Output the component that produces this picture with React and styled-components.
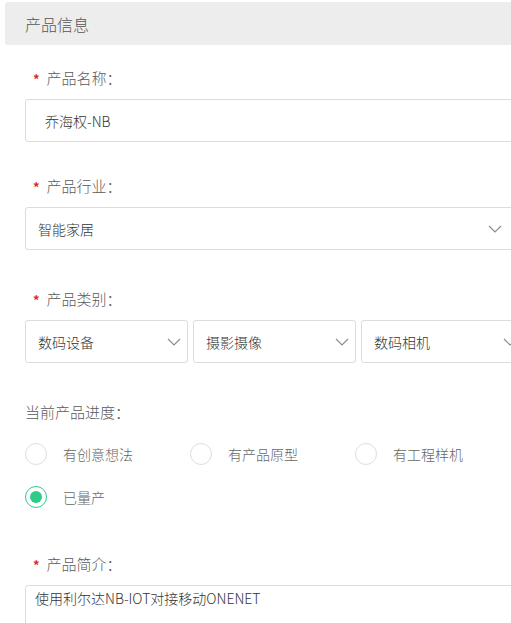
import React, { useState } from "react";
import styled, { createGlobalStyle } from "styled-components";

const GlobalStyle = createGlobalStyle`
  html, body {
    margin: 0;
    padding: 0;
    background: #fff;
    overflow: hidden;
  }
  body {
    font-family: "Noto Sans CJK SC", "Noto Sans", sans-serif;
    font-weight: 300;
  }
`;

const progressOptions = ["有创意想法", "有产品原型", "有工程样机", "已量产"];

function Chevron() {
  return (
    <svg width="14" height="8" viewBox="0 0 14 8">
      <polyline points="1,1 7,7 13,1" fill="none" stroke="#8a8a8a" strokeWidth="1.1" />
    </svg>
  );
}

function SelectBox({ value, width, arrowRight }) {
  return (
    <Select width={width}>
      <span>{value}</span>
      <ArrowBox right={arrowRight}>
        <Chevron />
      </ArrowBox>
    </Select>
  );
}

function App() {
  const [progress, setProgress] = useState("已量产");

  return (
    <Page>
      <GlobalStyle />
      <Header>产品信息</Header>
      <Form>
        <Label gap={23}>
          <Star>*</Star>产品名称：
        </Label>
        <TextInput defaultValue="乔海权-NB" />

        <Label gap={34}>
          <Star>*</Star>产品行业：
        </Label>
        <SelectBox value="智能家居" width="490px" arrowRight="12px" />

        <Label gap={39}>
          <Star>*</Star>产品类别：
        </Label>
        <SelectRow>
          <SelectBox value="数码设备" width="163px" arrowRight="6px" />
          <SelectBox value="摄影摄像" width="163px" arrowRight="6px" />
          <SelectBox value="数码相机" width="163px" arrowRight="6px" />
        </SelectRow>

        <PlainLabel>当前产品进度：</PlainLabel>
        <RadioGroup>
          {progressOptions.map((opt) => (
            <RadioItem key={opt} onClick={() => setProgress(opt)}>
              <RadioCircle checked={progress === opt} />
              <RadioText>{opt}</RadioText>
            </RadioItem>
          ))}
        </RadioGroup>

        <Label gap={46}>
          <Star>*</Star>产品简介：
        </Label>
        <TextArea defaultValue="使用利尔达NB-IOT对接移动ONENET" />
      </Form>
    </Page>
  );
}

export default App;

// styled-components
const Page = styled.div`
  width: 560px;
  padding: 2px 0 0 5px;
  box-sizing: border-box;
`;

const Header = styled.div`
  height: 43px;
  background: #ededed;
  border-radius: 3px 0 0 3px;
  padding-left: 20px;
  display: flex;
  align-items: center;
  font-size: 16px;
  color: #555;
`;

const Form = styled.div`
  padding-left: 20px;
  display: flex;
  flex-direction: column;
`;

const Label = styled.div`
  margin-top: ${(p) => p.gap}px;
  margin-bottom: 11px;
  padding-left: 8px;
  height: 20px;
  line-height: 20px;
  font-size: 15px;
  color: #5a5a5a;
  display: flex;
  align-items: center;
`;

const Star = styled.span`
  color: #e0272b;
  font-size: 13px;
  font-weight: 700;
  margin-right: 7px;
  position: relative;
  top: 1px;
`;

const PlainLabel = styled.div`
  margin-top: 39px;
  height: 20px;
  line-height: 20px;
  font-size: 15px;
  color: #5a5a5a;
`;

const TextInput = styled.input`
  width: 490px;
  height: 43px;
  box-sizing: border-box;
  border: 1px solid #dcdcdc;
  border-radius: 3px;
  padding: 0 19px;
  font-family: inherit;
  font-weight: inherit;
  font-size: 14px;
  color: #333;
  outline: none;
`;

const Select = styled.div`
  position: relative;
  width: ${(p) => p.width};
  height: 43px;
  box-sizing: border-box;
  border: 1px solid #dcdcdc;
  border-radius: 3px;
  padding: 0 12px;
  display: flex;
  align-items: center;
  font-size: 14px;
  color: #333;
  flex-shrink: 0;
`;

const ArrowBox = styled.div`
  position: absolute;
  right: ${(p) => p.right};
  top: 50%;
  transform: translateY(-50%);
  display: flex;
`;

const SelectRow = styled.div`
  display: flex;
  gap: 5px;
`;

const RadioGroup = styled.div`
  display: flex;
  flex-wrap: wrap;
  width: 500px;
  margin-top: 21px;
  row-gap: 21px;
`;

const RadioItem = styled.div`
  width: 165px;
  height: 22px;
  display: flex;
  align-items: center;
  cursor: pointer;
`;

const RadioCircle = styled.span`
  width: 22px;
  height: 22px;
  box-sizing: border-box;
  border-radius: 50%;
  border: 1px solid ${(p) => (p.checked ? "#2ecc87" : "#dedede")};
  display: flex;
  align-items: center;
  justify-content: center;
  flex-shrink: 0;

  &::after {
    content: "";
    width: 12px;
    height: 12px;
    border-radius: 50%;
    background: #2ecc87;
    display: ${(p) => (p.checked ? "block" : "none")};
  }
`;

const RadioText = styled.span`
  margin-left: 16px;
  font-size: 14px;
  color: #666;
`;

const TextArea = styled.textarea`
  width: 490px;
  height: 90px;
  box-sizing: border-box;
  border: 1px solid #dcdcdc;
  border-radius: 3px;
  padding: 2px 9px;
  font-family: inherit;
  font-weight: inherit;
  font-size: 14px;
  color: #333;
  resize: none;
  outline: none;
`;
